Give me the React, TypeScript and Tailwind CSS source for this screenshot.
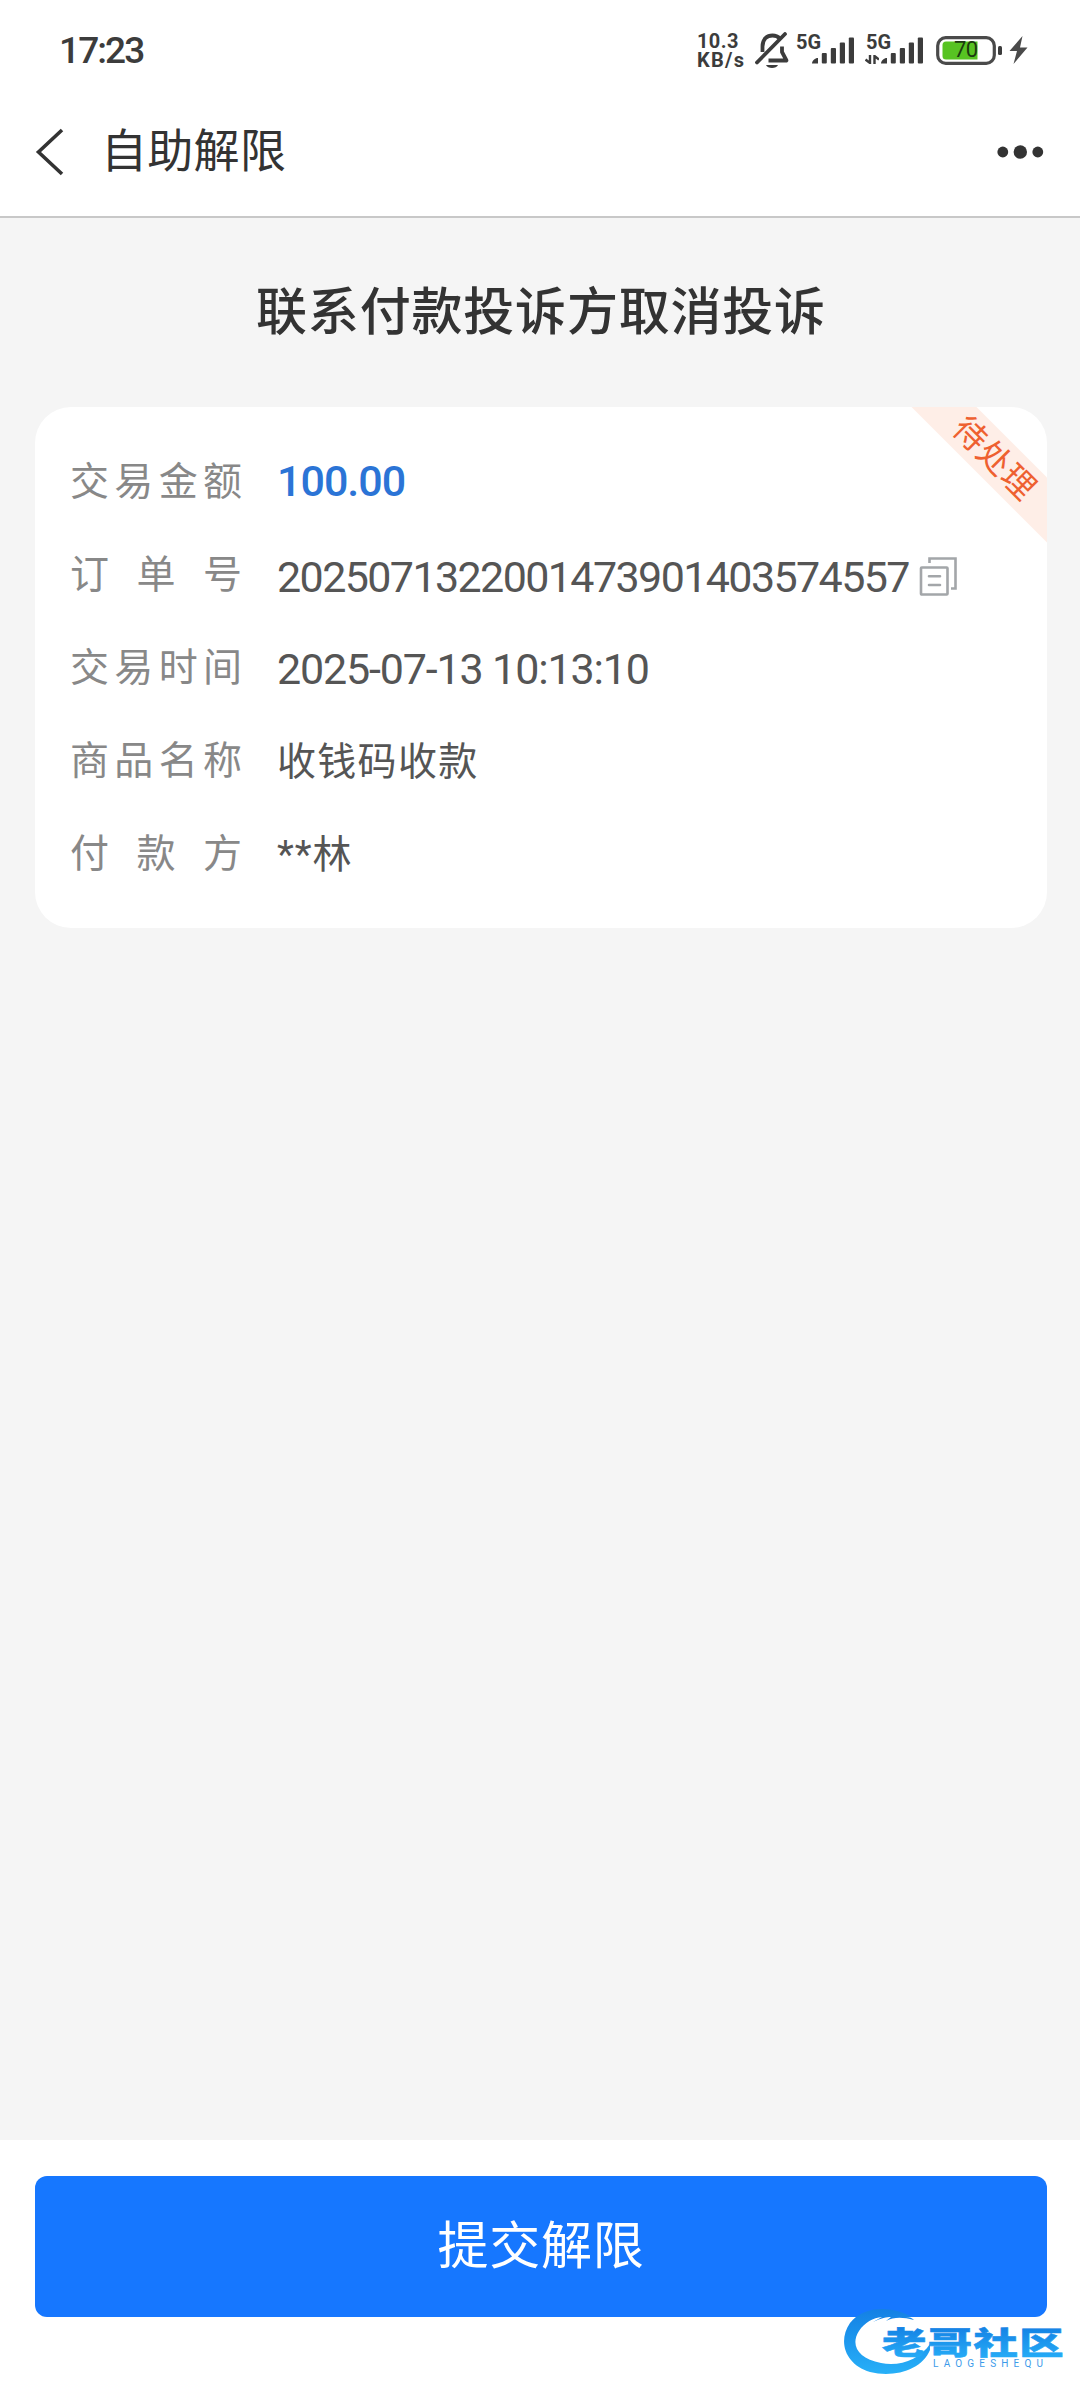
import { clsx } from "clsx";

type Row = {
  label: string;
  value: string;
  valueClass: string;
  copy?: boolean;
};

const rows: Row[] = [
  {
    label: "交易金额",
    value: "100.00",
    valueClass: "font-medium text-[#2b74d6] text-[43px] tracking-[-1px]"
  },
  {
    label: "订单号",
    value: "2025071322001473901403574557",
    valueClass: "text-[#555] text-[43px] tracking-[-1.6px] translate-y-[3px]",
    copy: true
  },
  {
    label: "交易时间",
    value: "2025-07-13 10:13:10",
    valueClass: "text-[#555] text-[43px] tracking-[-1.15px] translate-y-[2px]"
  },
  { label: "商品名称", value: "收钱码收款", valueClass: "text-[#555] text-[39px] tracking-[1.3px] translate-y-[2px]" },
  { label: "付款方", value: "**林", valueClass: "text-[#555] text-[39px] tracking-[1px] translate-y-[2px]" }
];

function SignalBars() {
  return (
    <svg width="42" height="27" viewBox="0 0 42 27" fill="#3c3c3c">
      <path d="M0 26.500c0-3 3-5.500 6-5.500v5.500z" />
      <rect x="9.800" y="16" width="5" height="10.500" rx="1" />
      <rect x="18.800" y="11" width="5.200" height="15.500" rx="1" />
      <rect x="27.800" y="5.500" width="5.200" height="21" rx="1" />
      <rect x="36.800" y="0.500" width="5.200" height="26" rx="1" />
    </svg>
  );
}

function StatusBar() {
  return (
    <div className="flex h-[100px] items-center justify-between pl-[59px] pr-[52px] text-[#3c3c3c]">
      <span className="text-[37px] font-medium leading-none tracking-[-1.900px]">17:23</span>

      <div className="flex items-center">
        <div className="w-[58px] pt-px text-[20px] font-bold leading-[19px]">
          <p className="tracking-[0.4px]">10.3</p>
          <p className="tracking-[1.3px]">KB/s</p>
        </div>

        <svg width="35" height="37" viewBox="0 0 35 37" fill="none" stroke="#3c3c3c" strokeWidth="3.800" strokeLinejoin="round">
          <path d="M7.500 20V14.500C7.500 7 12 3.500 17.500 3.500c3 0 5.500 1 7.200 3" />
          <path d="M27 14.500v5.500l4.500 8.500H13.500" />
          <path d="M30 2L2 30.500" strokeLinecap="round" />
          <path d="M11 33h12c-1.500 4-10.500 4-12 0z" fill="#3c3c3c" stroke="none" />
        </svg>

        <div className="relative ml-[7px] flex w-[70px] items-center pl-[15px]">
          <span className="absolute -top-[5px] -left-px text-[20px] font-bold leading-none">5G</span>
          <SignalBars />
        </div>

        <div className="relative flex w-[69px] items-center pl-[14px]">
          <span className="absolute -top-[5px] -left-px text-[20px] font-bold leading-none">5G</span>
          <svg className="absolute bottom-0 -left-[2px]" width="14" height="9" viewBox="0 0 14 9" stroke="#3c3c3c" strokeWidth="2.400" fill="none">
            <path d="M5 0v8L0.500 4.500M9.500 9V1L14 4.500" />
          </svg>
          <SignalBars />
        </div>

        <div className="relative flex items-center">
          <svg width="67" height="29" viewBox="0 0 67 29">
            <rect x="1.700" y="1.700" width="56.600" height="25.600" rx="8" fill="#fff" stroke="#4a4a4a" strokeWidth="3.200" />
            <path d="M10 5.500h31.500v18H10a3.500 3.500 0 0 1-3.500-3.500V9A3.500 3.500 0 0 1 10 5.500z" fill="#57c322" />
            <rect x="62" y="10" width="4" height="9" rx="1.500" fill="#3c3c3c" />
          </svg>
          <span className="absolute left-[18px] text-[22px] leading-none tracking-[-0.5px] text-[#1c3a10]">70</span>
        </div>

        <svg className="ml-[6px]" width="19" height="28" viewBox="0 0 19 28" fill="#4a4a4a">
          <path d="M13.500 0L0.500 15h7.500L4.500 28 18.500 11.500h-7.500z" />
        </svg>
      </div>
    </div>
  );
}

function NavBar() {
  return (
    <div className="flex h-[118px] items-center border-b-2 border-[#c8c8c8] pb-[12px] pl-[35px] pr-[36px]">
      <svg width="30" height="48" viewBox="0 0 30 48" fill="none" stroke="#333" strokeWidth="3.600">
        <path d="M27 2L3.500 24 27 46" />
      </svg>
      <h1 className="ml-[36px] -translate-y-px text-[46px] leading-none tracking-[0.3px] text-[#333]">自助解限</h1>
      <svg className="ml-auto" width="47" height="14" viewBox="0 0 47 14" fill="#333">
        <circle cx="5.800" cy="7" r="5.400" />
        <circle cx="23.300" cy="7" r="6.700" />
        <circle cx="40.800" cy="7" r="5.400" />
      </svg>
    </div>
  );
}

function CopyIcon() {
  return (
    <svg className="ml-[10px] shrink-0 translate-y-[2px]" width="39" height="39" viewBox="0 0 39 39" fill="none" stroke="#a3a6a9" strokeWidth="2.600">
      <rect x="2" y="10.500" width="26.500" height="27" rx="0.800" />
      <path d="M10.500 6V1.500h26v30H32" />
      <path d="M10 19.300h11M10 28h11" strokeLinecap="round" />
    </svg>
  );
}

function OrderCard() {
  return (
    <section className="relative ml-[35px] mr-[33px] h-[521px] overflow-hidden rounded-[36px] bg-white pl-[35px] pt-[28px]">
      {rows.map((row) => (
        <div key={row.label} className="flex h-[93px] items-center whitespace-nowrap">
          <div className="flex w-[172px] translate-y-px justify-between text-[39px] leading-none text-[#888]">
            {row.label.split("").map((char) => (
              <span key={char}>{char}</span>
            ))}
          </div>
          <span className={clsx("ml-[35px] leading-none", row.valueClass)}>{row.value}</span>
          {row.copy ? <CopyIcon /> : null}
        </div>
      ))}

      <div className="absolute -right-[68px] top-[28px] flex h-[46px] w-[240px] rotate-45 items-center justify-center bg-[#feeee7] text-[33px] leading-none tracking-[1px] text-[#ee6030]">
        待处理
      </div>
    </section>
  );
}

function Watermark() {
  return (
    <svg className="absolute bottom-[16px] left-[840px]" width="230" height="76" viewBox="0 0 230 76">
      <defs>
        <linearGradient id="brand" x1="0" y1="0" x2="0" y2="1">
          <stop offset="0" stopColor="#1480e4" />
          <stop offset="1" stopColor="#27b0f8" />
        </linearGradient>
      </defs>
      <path
        transform="translate(1 -3)"
        d="M71 12C50 0 22 1 9 18c-13 19-4 42 20 49 24 6 52-2 60-22v-6c-10 15-30 23-49 19C17 54 9 40 18 26 24 17 32 13 41 12l-9 5c8-4 14-5 18-5l-5 4c8-4 16-4 28-1-2-2-4-3-8-3z"
        fill="url(#brand)"
      />
      <text
        transform="translate(42 46) scale(1.430 1)"
        fontSize="31"
        fontWeight="900"
        textLength="127"
        fill="url(#brand)"
        stroke="url(#brand)"
        strokeWidth="0.600"
      >
        老哥社区
      </text>
      <text x="93" y="59" fontSize="10" textLength="110" fill="#3d9bea">
        LAOGESHEQU
      </text>
    </svg>
  );
}

export default function App() {
  return (
    <div className="relative flex h-[2400px] w-[1080px] flex-col overflow-hidden bg-[#f5f5f5] font-[Roboto,'Noto_Sans_CJK_SC',sans-serif]">
      <header className="bg-white">
        <StatusBar />
        <NavBar />
      </header>

      <main className="flex-1">
        <h2 className="pb-[69px] pl-[2px] pt-[69px] text-center text-[51px] font-medium leading-none tracking-[0.8px] text-[#333]">
          联系付款投诉方取消投诉
        </h2>
        <OrderCard />
      </main>

      <footer className="h-[260px] bg-white pl-[35px] pr-[33px] pt-[36px]">
        <button
          type="button"
          className="h-[141px] w-full rounded-[12px] bg-[#1677ff] text-[51px] leading-none tracking-[0.8px] text-white"
        >
          提交解限
        </button>
      </footer>

      <Watermark />
    </div>
  );
}
